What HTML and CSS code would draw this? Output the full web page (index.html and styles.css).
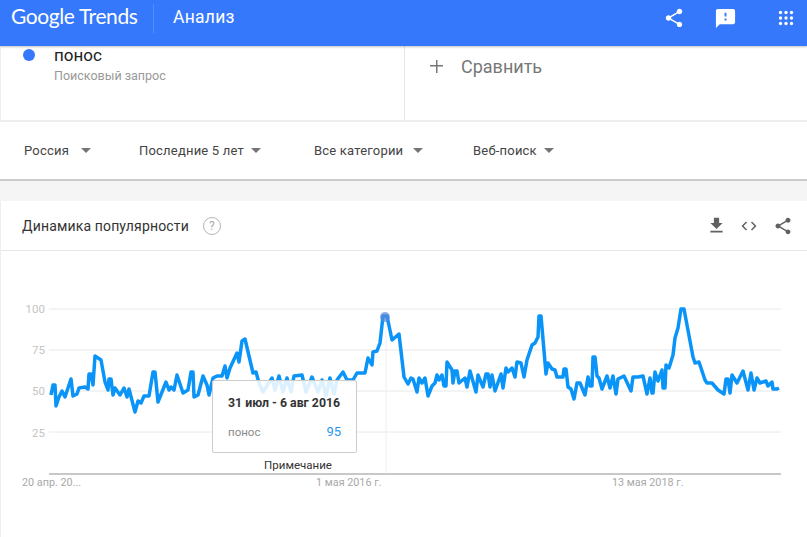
FILE: index.html
```html
<!DOCTYPE html>
<html lang="ru">

<head>
    <meta charset="UTF-8">
    <meta name="viewport" content="width=device-width, initial-scale=1.0">
    <title>Google Trends</title>
    <link rel="stylesheet" href="styles.css">
</head>

<body>

    <header class="topbar">
        <span class="logo">Google Trends</span>
        <span class="topbar-title">Анализ</span>
        <div class="topbar-actions">
            <svg class="icon-share" viewBox="0 0 24 24"><path d="M18 16.08c-.76 0-1.44.3-1.96.77L8.91 12.7c.05-.23.09-.46.09-.7s-.04-.47-.09-.7l7.05-4.11c.54.5 1.25.81 2.04.81 1.66 0 3-1.34 3-3s-1.34-3-3-3-3 1.34-3 3c0 .24.04.47.09.7L8.04 9.81C7.5 9.31 6.79 9 6 9c-1.66 0-3 1.34-3 3s1.34 3 3 3c.79 0 1.5-.31 2.04-.81l7.12 4.16c-.05.21-.08.43-.08.65 0 1.61 1.31 2.92 2.92 2.92s2.92-1.31 2.92-2.92-1.31-2.92-2.92-2.92z"/></svg>
            <svg class="icon-feedback" viewBox="0 0 24 24"><path d="M20 2H4c-1.1 0-1.99.9-1.99 2L2 22l4-4h14c1.1 0 2-.9 2-2V4c0-1.1-.9-2-2-2zm-7 12h-2v-2h2v2zm0-4h-2V6h2v4z"/></svg>
            <svg class="icon-apps" viewBox="0 0 24 24">
                <circle cx="6" cy="6" r="1.8"/><circle cx="12" cy="6" r="1.8"/><circle cx="18" cy="6" r="1.8"/>
                <circle cx="6" cy="12" r="1.8"/><circle cx="12" cy="12" r="1.8"/><circle cx="18" cy="12" r="1.8"/>
                <circle cx="6" cy="18" r="1.8"/><circle cx="12" cy="18" r="1.8"/><circle cx="18" cy="18" r="1.8"/>
            </svg>
        </div>
    </header>

    <section class="terms">
        <div class="term">
            <span class="term-dot"></span>
            <div>
                <div class="term-name">понос</div>
                <div class="term-type">Поисковый запрос</div>
            </div>
        </div>
        <div class="compare">
            <span class="compare-plus"></span>
            <span>Сравнить</span>
        </div>
    </section>

    <section class="filters">
        <div class="filter filter-geo">Россия <span class="arrow"></span></div>
        <div class="filter filter-time">Последние 5 лет <span class="arrow"></span></div>
        <div class="filter filter-cat">Все категории <span class="arrow"></span></div>
        <div class="filter filter-type">Веб-поиск <span class="arrow"></span></div>
    </section>

    <section class="card">
        <div class="card-head">
            <span class="card-title">Динамика популярности</span>
            <span class="help">?</span>
            <div class="card-actions">
                <svg class="icon-download" viewBox="0 0 24 24"><path d="M19 9h-4V3H9v6H5l7 7 7-7zM5 18v2h14v-2H5z"/></svg>
                <svg class="icon-code" viewBox="0 0 24 24"><path d="M9.4 16.6 4.8 12l4.6-4.6L8 6l-6 6 6 6 1.4-1.4zm5.2 0 4.6-4.6-4.6-4.6L16 6l6 6-6 6-1.4-1.4z"/></svg>
                <svg class="icon-share-small" viewBox="0 0 24 24"><path d="M18 16.08c-.76 0-1.44.3-1.96.77L8.91 12.7c.05-.23.09-.46.09-.7s-.04-.47-.09-.7l7.05-4.11c.54.5 1.25.81 2.04.81 1.66 0 3-1.34 3-3s-1.34-3-3-3-3 1.34-3 3c0 .24.04.47.09.7L8.04 9.81C7.5 9.31 6.79 9 6 9c-1.66 0-3 1.34-3 3s1.34 3 3 3c.79 0 1.5-.31 2.04-.81l7.12 4.16c-.05.21-.08.43-.08.65 0 1.61 1.31 2.92 2.92 2.92s2.92-1.31 2.92-2.92-1.31-2.92-2.92-2.92z"/></svg>
            </div>
        </div>

        <div class="chart">
            <!-- viewBox uses page coordinates, the chart starts at y=251 -->
            <svg class="chart-svg" viewBox="0 251 807 286">
                <g class="grid">
                    <line x1="49" y1="309" x2="781" y2="309"/>
                    <line x1="49" y1="350" x2="781" y2="350"/>
                    <line x1="49" y1="391" x2="781" y2="391"/>
                    <line x1="49" y1="432" x2="781" y2="432"/>
                </g>
                <g class="y-labels">
                    <text x="45" y="313">100</text>
                    <text x="45" y="354">75</text>
                    <text x="45" y="395">50</text>
                    <text x="45" y="437">25</text>
                </g>
                <line class="marker" x1="386" y1="317" x2="386" y2="473"/>
                <polyline class="trend" points="51,395 53,385 55,385 56,406 59,397 62,391 65,397 71,379 73,396 77,394 79,388 85,387 88,389 89,374 91,374 93,385 95,356 101,360 105,382 108,390 109,379 111,379 113,395 115,388 120,395 124,388 127,397 129,389 135,412 138,401 141,403 144,396 149,396 153,372 155,372 158,402 166,382 169,390 171,387 174,390 177,375 183,393 188,390 191,372 193,372 194,397 198,395 203,376 207,385 209,395 213,378 217,376 222,376 225,366 227,378 230,368 237,353 239,362 242,341 245,339 253,373 256,372 259,383 263,392 268,384 272,378 275,390 279,376 283,392 287,378 291,392 294,376 302,375 306,392 312,377 318,392 322,380 326,396 330,378 334,394 337,380 343,372 347,380 353,380 357,373 365,373 368,358 372,365 373,352 377,351 380,343 383,316 387,316 392,340 399,334 404,377 408,384 411,378 413,379 417,392 419,378 422,383 425,378 428,396 432,386 435,383 437,375 439,380 442,375 444,386 446,386 447,362 452,370 453,383 455,371 457,371 459,383 465,378 467,387 470,371 476,392 478,375 483,387 486,374 488,374 490,387 492,375 495,391 501,374 503,388 506,368 508,372 512,368 515,377 517,362 521,363 524,377 527,360 532,345 535,343 538,337 539,316 541,316 546,374 548,363 552,369 555,370 557,377 563,377 564,369 566,369 568,387 571,389 574,399 577,383 580,383 585,395 588,377 590,386 592,386 593,357 595,357 597,376 599,378 602,389 607,376 610,388 613,376 616,394 618,379 624,376 631,391 633,377 638,377 643,376 647,394 650,378 652,393 653,393 655,372 658,381 662,370 663,388 665,388 666,365 669,368 673,355 675,338 678,328 681,309 684,309 693,357 695,363 699,362 705,380 707,383 712,383 718,390 724,394 726,379 728,379 730,393 732,375 737,383 743,371 748,390 751,373 754,390 757,378 760,383 766,381 768,386 772,382 773,389 777,389 779,388"/>
                <circle class="trend-dot" cx="385" cy="317" r="5"/>
                <line class="axis" x1="49" y1="474" x2="781" y2="474"/>
                <text class="note" x="298" y="469">Примечание</text>
                <g class="x-labels">
                    <text x="22" y="486">20 апр. 20...</text>
                    <text x="316" y="486">1 мая 2016 г.</text>
                    <text x="612" y="486">13 мая 2018 г.</text>
                </g>
            </svg>

            <div class="tooltip">
                <div class="tooltip-date">31 июл - 6 авг 2016</div>
                <div class="tooltip-row">
                    <span class="tooltip-term">понос</span>
                    <span class="tooltip-value">95</span>
                </div>
            </div>
        </div>
    </section>

</body>

</html>
```

FILE: styles.css
```css
html,
body {
    margin: 0;
    height: 537px;
    overflow: hidden;
}

body {
    background-color: #f5f5f5;
    font-family: Roboto, "Noto Sans", sans-serif;
    color: #444;
}

/* top bar */
.topbar {
    position: relative;
    z-index: 2;
    display: flex;
    align-items: flex-start;
    height: 46px;
    background-color: #3578fb;
    box-shadow: 0 1px 2px rgb(0 0 0 / 25%);
    color: #fff;
}

.logo {
    width: 142px;
    padding-left: 11px;
    font-family: Lato, Roboto, sans-serif;
    font-size: 21px;
    line-height: 32px;
    white-space: nowrap;
    letter-spacing: -0.4px;
}

.topbar-title {
    height: 29px;
    margin-top: 4px;
    padding-left: 19px;
    border-left: 1px solid rgb(255 255 255 / 15%);
    font-size: 17.5px;
    line-height: 27px;
    letter-spacing: 0.25px;
}

.topbar-actions {
    display: flex;
    margin-left: auto;
    padding: 7px 10px 0 0;
    fill: #fff;
}

.icon-share {
    width: 22px;
    height: 22px;
}

.icon-feedback {
    width: 23px;
    height: 23px;
    margin-left: 29px;
}

.icon-apps {
    width: 22px;
    height: 22px;
    margin-left: 38px;
}

/* search terms */
.terms {
    display: flex;
    height: 74px;
    background-color: #fff;
    border-bottom: 2px solid #eee;
}

.term {
    display: flex;
    width: 405px;
    box-sizing: border-box;
    padding-left: 22px;
    border-left: 1px solid #eee;
    border-right: 1px solid #e6e6e6;
}

.term-dot {
    width: 12px;
    height: 12px;
    margin-top: 3px;
    margin-right: 19px;
    border-radius: 50%;
    background-color: #3578fb;
}

.term-name {
    font-size: 17px;
    line-height: 18px;
    color: #222;
}

.term-type {
    margin-top: 3px;
    font-size: 12.5px;
    line-height: 17px;
    color: #999;
}

.compare {
    display: flex;
    align-items: center;
    height: 40px;
    padding-left: 25px;
    font-size: 18px;
    color: #777;
}

.compare-plus {
    position: relative;
    width: 13px;
    height: 13px;
    margin-right: 18px;
    background:
        linear-gradient(#777, #777) center / 13px 1.5px no-repeat,
        linear-gradient(#777, #777) center / 1.5px 13px no-repeat;
}

/* filters */
.filters {
    display: grid;
    grid-template-columns: 115px 175px 159px auto;
    align-items: center;
    height: 57px;
    padding-left: 24px;
    background-color: #fff;
    border-bottom: 2px solid #ccc;
}

.filter {
    display: flex;
    align-items: center;
    font-size: 13px;
    letter-spacing: 0.2px;
    color: #444;
}

.filter-geo {
    gap: 12px;
}

.filter-time {
    gap: 7px;
}

.filter-cat {
    gap: 10px;
}

.filter-type {
    gap: 7px;
}

.arrow {
    width: 0;
    height: 0;
    border-left: 5px solid transparent;
    border-right: 5px solid transparent;
    border-top: 5px solid #757575;
}

/* chart card */
.card {
    margin-top: 20px;
    background-color: #fff;
    border-left: 1px solid #eee;
}

.card-head {
    display: flex;
    align-items: center;
    height: 49px;
    padding-left: 21px;
    border-bottom: 1px solid #e6e6e6;
}

.card-title {
    font-size: 14px;
    letter-spacing: 0.15px;
    color: #333;
}

.help {
    width: 16px;
    height: 16px;
    margin-left: 14px;
    border: 1.5px solid #b5b5b5;
    border-radius: 50%;
    text-align: center;
    font-size: 12px;
    line-height: 16px;
    color: #aaa;
}

.card-actions {
    display: flex;
    align-items: center;
    margin-left: auto;
    padding-right: 14px;
    fill: #616161;
}

.icon-download {
    width: 21px;
    height: 21px;
}

.icon-code {
    width: 18px;
    height: 18px;
    margin-left: 13px;
}

.icon-share-small {
    width: 20px;
    height: 20px;
    margin-left: 15px;
}

.chart {
    position: relative;
    height: 286px;
    margin-left: -1px;
}

.chart-svg {
    display: block;
    width: 807px;
    height: 286px;
}

.grid line {
    stroke: #e8e8e8;
    stroke-width: 1;
}

.y-labels text {
    font-size: 11.5px;
    text-anchor: end;
    fill: #c4c4c4;
}

.x-labels text {
    font-size: 10.8px;
    fill: #a8a8a8;
}

.marker {
    stroke: #eee;
    stroke-width: 1;
}

.trend {
    fill: none;
    stroke: #0b94f7;
    stroke-width: 3.5;
    stroke-linejoin: round;
}

.trend-dot {
    fill: #5b87d8;
    fill-opacity: 0.7;
}

.axis {
    stroke: #c8c8c8;
    stroke-width: 2;
}

.note {
    font-size: 11.5px;
    text-anchor: middle;
    fill: #333;
}

.tooltip {
    position: absolute;
    left: 212px;
    top: 129px;
    box-sizing: border-box;
    width: 145px;
    height: 73px;
    padding: 13px 15px 0;
    background-color: rgb(255 255 255 / 86%);
    border: 1px solid #ccc;
    border-radius: 2px;
}

.tooltip-date {
    font-size: 12.3px;
    font-weight: 700;
    line-height: 18px;
    white-space: nowrap;
    color: #333;
}

.tooltip-row {
    display: flex;
    justify-content: space-between;
    margin-top: 11px;
    line-height: 18px;
}

.tooltip-term {
    font-size: 11.5px;
    color: #8a8a8a;
}

.tooltip-value {
    font-size: 13px;
    color: #2a96f0;
}
```
